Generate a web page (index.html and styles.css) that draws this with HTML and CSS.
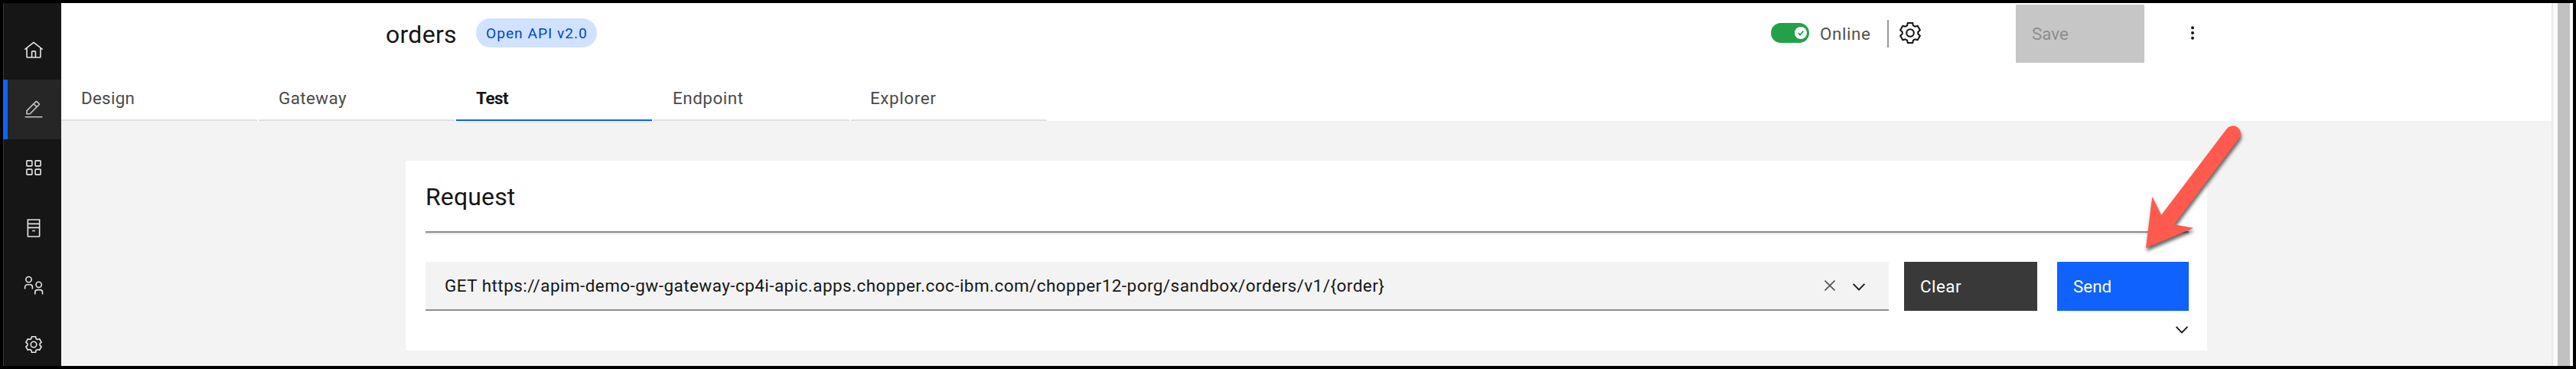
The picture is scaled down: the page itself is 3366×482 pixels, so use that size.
FILE: index.html
```
<!DOCTYPE html>
<html lang="en">
<head>
<meta charset="utf-8">
<title>orders</title>
<link rel="stylesheet" href="styles.css">
</head>
<body>
<svg class="defs" width="0" height="0">
  <symbol id="gear" viewBox="-14 -14 28 28">
    <path d="M-3.2-13H3.2L4-9.6 6.3-8.3 9.66-9.27 12.86-3.73 10.3-1.34V1.34L12.86 3.73 9.66 9.27 6.3 8.3 4 9.6 3.2 13H-3.2L-4 9.6-6.3 8.3-9.66 9.27-12.86 3.73-10.3 1.34V-1.34L-12.86-3.73-9.66-9.27-6.3-8.3-4-9.6Z"/>
    <circle r="4.8"/>
  </symbol>
  <symbol id="chevron" viewBox="0 0 18 12"><path d="M1.6 1.8 9 9.4 16.4 1.8"/></symbol>
</svg>
<div class="app">
  <nav class="rail">
    <a class="rail-item"><svg class="glyph" viewBox="0 0 32 32"><path d="M16.6123,2.2138a1.01,1.01,0,0,0-1.2427,0L1,13.4194l1.2427,1.5717L4,13.6206V26a2.0041,2.0041,0,0,0,2,2H26a2.0037,2.0037,0,0,0,2-2V13.63L29.7573,15,31,13.4282ZM18,26H14V18h4Zm2,0V18a2.0023,2.0023,0,0,0-2-2H14a2.002,2.002,0,0,0-2,2v8H6V12.0615l10-7.79,10,7.8005V26Z"/></svg></a>
    <a class="rail-item active"><svg class="glyph" viewBox="0 0 32 32"><path d="M2 27H30V29H2zM25.4 9c.8-.8.8-2 0-2.8l-3.6-3.6c-.8-.8-2-.8-2.8 0l-15 15V24h6.4L25.4 9zM20.4 4L24 7.6l-3 3L17.4 7 20.4 4zM6 22v-3.6l10-10 3.6 3.6-10 10H6z"/></svg></a>
    <a class="rail-item raised"><svg class="glyph line" viewBox="0 0 32 32"><rect x="4.8" y="4.8" width="8.6" height="8.6" rx="1"/><rect x="18.6" y="4.8" width="8.6" height="8.6" rx="1"/><rect x="4.8" y="18.6" width="8.6" height="8.6" rx="1"/><rect x="18.6" y="18.6" width="8.6" height="8.6" rx="1"/></svg></a>
    <a class="rail-item"><svg class="glyph line" viewBox="0 0 32 32"><path d="M6.6 2.5H25.4V28.5a1 1 0 0 1-1 1H7.6a1 1 0 0 1-1-1ZM6.6 9H25.4M6.6 15.3H25.4M13.7 20.3h4.6"/></svg></a>
    <a class="rail-item raised"><svg class="glyph line" viewBox="0 0 32 32"><circle cx="8" cy="6.3" r="4.5"/><circle cx="24.2" cy="14.6" r="4.5"/><path d="M2 21.6V18.5a4 4 0 0 1 4-4h4a4 4 0 0 1 4 4V21.6M18.2 30V26.9a4 4 0 0 1 4-4h4a4 4 0 0 1 4 4V30"/></svg></a>
    <a class="rail-item raised"><svg class="gear gear-small"><use href="#gear"/></svg></a>
  </nav>
  <main class="main">
    <header class="header">
      <div class="title-row">
        <h1 class="title">orders</h1>
        <span class="tag">Open API v2.0</span>
        <div class="status">
          <span class="toggle"><svg class="knob" viewBox="0 0 16 16"><circle cx="8" cy="8" r="8"/><path d="M4.8 8.2 7.1 10.6 11.3 5.6"/></svg></span>
          <span class="status-text">Online</span>
          <span class="divider"></span>
          <svg class="gear"><use href="#gear"/></svg>
        </div>
        <button class="btn save" disabled>Save</button>
        <svg class="kebab" viewBox="0 0 6 20"><circle cx="3" cy="3.3" r="2"/><circle cx="3" cy="10" r="2"/><circle cx="3" cy="16.7" r="2"/></svg>
      </div>
      <div class="tabs">
        <a class="tab design">Design</a>
        <a class="tab gateway">Gateway</a>
        <a class="tab selected">Test</a>
        <a class="tab endpoint">Endpoint</a>
        <a class="tab explorer">Explorer</a>
      </div>
    </header>
    <section class="card">
      <h2 class="card-title">Request</h2>
      <div class="rule"></div>
      <div class="request-row">
        <div class="field">
          <span class="url">GET https://apim-demo-gw-gateway-cp4i-apic.apps.chopper.coc-ibm.com/chopper12-porg/sandbox/orders/v1/{order}</span>
          <svg class="close" viewBox="0 0 14 14"><path d="M.5.5 13.5 13.5M13.5.5.5 13.5"/></svg>
          <svg class="chevron"><use href="#chevron"/></svg>
        </div>
        <button class="btn clear">Clear</button>
        <button class="btn send">Send</button>
      </div>
      <div class="expand"><svg class="chevron"><use href="#chevron"/></svg></div>
    </section>
  </main>
  <div class="scrollbar"><div class="thumb"></div></div>
</div>
<svg class="arrow" viewBox="0 0 220 220"><path d="M52.3 116.7 64 141 149.5 28.5A10 10 0 0 1 166 40.5L81 153.3 106.3 157.7 44 184Z"/></svg>
</body>
</html>
```
FILE: styles.css
```
* { box-sizing: border-box; }
body {
  margin: 0;
  background: #000;
  font-family: Roboto, "Liberation Sans", sans-serif;
  font-size: 22.4px;
  color: #161616;
}
.defs { position: absolute; }
.app {
  display: flex;
  width: 3366px;
  height: 482px;
  padding: 4px 4px 4px 4px;
  background: #000;
  overflow: hidden;
}

/* Left navigation rail */
.rail {
  width: 76px;
  padding-top: 23px;
  background: #161616;
  border-left: 1px solid #393939;
  display: flex;
  flex-direction: column;
  flex: none;
}
.rail-item {
  height: 77px;
  flex: none;
  display: flex;
  align-items: center;
  justify-content: center;
  padding-left: 2px;
}
.rail-item.raised { padding-bottom: 3px; }
.rail-item:last-child { height: 66px; padding: 8px 0 0 2px; }
.rail-item.active {
  height: 78px;
  margin-left: -1px;
  background: #262626;
  border-left: 6px solid #0f62fe;
  padding: 0 3px 0 0;
}
.glyph { width: 26px; height: 26px; fill: #e4e4e4; }
.active .glyph { fill: #c6c6c6; }
.glyph.line { fill: none; stroke: #e4e4e4; stroke-width: 2; }
.gear { width: 28px; height: 28px; fill: none; stroke: #161616; stroke-width: 2.1; stroke-linejoin: round; }
.gear-small { width: 22px; height: 22px; stroke: #e4e4e4; }

/* Header */
.main { width: 3254px; background: #f3f3f3; flex: none; }
.header { height: 154px; background: #fff; display: flex; flex-direction: column; justify-content: space-between; }
.title-row { height: 80px; display: flex; align-items: center; padding-left: 424px; }
.title { margin: 2px 0 0; width: 118px; font-size: 32px; font-weight: 400; line-height: 40px; letter-spacing: .27px; }
.tag {
  width: 158px;
  height: 38px;
  margin-top: -2px;
  padding-left: 13px;
  border-radius: 19px;
  background: #d0e2ff;
  color: #0043ce;
  font-size: 19.2px;
  line-height: 39px;
  letter-spacing: .98px;
}
.status { display: flex; align-items: center; margin-left: 1534px; width: 320px; }
.toggle { width: 50px; height: 26px; border-radius: 13px; background: #24a148; display: flex; align-items: center; justify-content: flex-end; padding-right: 3px; margin-top: -2px; }
.knob { width: 16px; height: 16px; fill: #fff; }
.knob path { fill: none; stroke: #24a148; stroke-width: 1.8; }
.status-text { width: 102px; padding-left: 14px; color: #525252; letter-spacing: .6px; }
.divider { width: 2px; height: 36px; background: #999; }
.status .gear { margin: -3px 0 0 14px; }
.btn {
  border: 0;
  padding: 0;
  font-family: inherit;
  font-size: 22.4px;
  line-height: 64px;
  text-align: left;
  color: #fff;
}
.save { width: 168px; height: 76px; background: #c6c6c6; color: #8d8d8d; padding-left: 21px; }
.kebab { width: 6px; height: 20px; margin: -2px 0 0 60px; fill: #161616; }

.tabs { display: flex; gap: 2px; }
.tab {
  width: 256px;
  height: 60px;
  padding: 1px 0 0 26px;
  line-height: 58px;
  color: #4a4a4a;
  border-bottom: 2px solid #e0e0e0;
}
.design { letter-spacing: .27px; }
.gateway { letter-spacing: .42px; }
.endpoint { letter-spacing: .55px; padding-left: 25px; }
.explorer { letter-spacing: .63px; padding-left: 25px; }
.selected { font-weight: 700; letter-spacing: -.45px; color: #161616; border-color: #0f62fe; }

/* Request card */
.card { width: 2354px; height: 248px; margin: 52px 0 0 450px; padding: 27px 24px 0 26px; background: #fff; }
.card-title { margin: 0; font-size: 32px; font-weight: 400; line-height: 40px; letter-spacing: .13px; }
.rule { height: 4px; margin-top: 25px; background: linear-gradient(#8d8d8d 50%, #e8e8e8 50%); }
.request-row { display: flex; margin-top: 36px; }
.field {
  width: 1912px;
  height: 64px;
  display: flex;
  align-items: center;
  padding: 0 30px 0 25px;
  background: #f3f3f3;
  border-bottom: 2px solid #8d8d8d;
}
.url { flex: 1; letter-spacing: .498px; white-space: nowrap; }
.close { width: 14px; height: 14px; stroke: #525252; stroke-width: 1.6; margin-right: 22px; }
.chevron { width: 18px; height: 12px; fill: none; stroke: #161616; stroke-width: 1.9; margin-top: 3px; }
.clear { width: 174px; height: 64px; margin-left: 20px; padding-left: 21px; background: #393939; letter-spacing: .48px; }
.send { width: 172px; height: 64px; margin-left: 26px; padding-left: 21px; background: #0f62fe; }
.expand { display: flex; justify-content: flex-end; margin-top: 16px; }

/* Scrollbar */
.scrollbar { width: 28px; border-left: 2px solid #e8e8e8; background: #fafafa; padding-left: 6px; flex: none; }
.thumb { width: 16px; height: 100%; background: #c1c1c1; }

/* Pointer overlay */
.arrow {
  position: absolute;
  left: 2760px;
  top: 140px;
  width: 220px;
  height: 220px;
  fill: #ff5a4d;
  filter: drop-shadow(1px 4px 2px rgba(0, 0, 0, .6));
}
```
